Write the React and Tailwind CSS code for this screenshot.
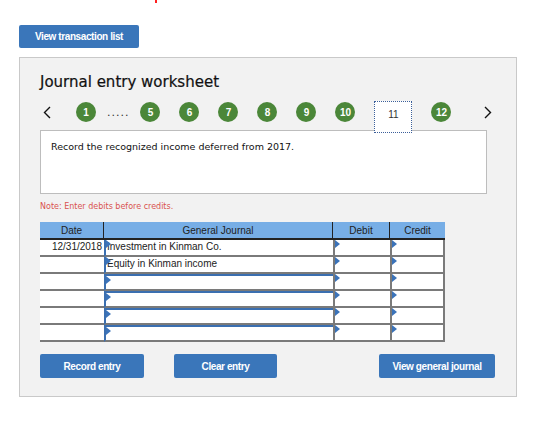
import React from 'react';

const circles = ['5', '6', '7', '8', '9', '10'];

function Flag() {
    return <span className="absolute left-0 top-0 w-0 h-0 border-t-[4px] border-b-[4px] border-l-[5px] border-t-transparent border-b-transparent border-l-[#3b73b9]" />;
}

function Step({ n, className = '' }) {
    return (
        <span className={`mt-[2px] w-[20px] h-[20px] rounded-full bg-[#4b8739] text-white text-[10px] font-bold flex items-center justify-center font-['Liberation_Sans',sans-serif] ${className}`}>
            {n}
        </span>
    );
}

function Chevron({ dir, className = '' }) {
    return (
        <svg className={className} width="8" height="13" viewBox="0 0 8 13" fill="none" stroke="#111" strokeWidth="1.4">
            {dir === 'left' ? <polyline points="7,1 1.5,6.5 7,12" /> : <polyline points="1,1 6.5,6.5 1,12" />}
        </svg>
    );
}

function Cell({ w, blue, text, flag = true, top }) {
    return (
        <div
            className={`relative h-[17px] bg-white border-b-2 border-[#7a7a7a] ${w} ${blue ? 'border-l-2 border-l-[#3b6fb0]' : 'border-l-2 border-l-[#7a7a7a]'} ${top ? 'border-t-2 border-t-[#3b6fb0]' : ''}`}
        >
            {flag && <Flag />}
            {text && <span className="block pl-[1px] leading-[14px] text-[10px] text-[#222]">{text}</span>}
        </div>
    );
}

export default function App() {
    const rows = [
        { date: '12/31/2018', gj: 'Investment in Kinman Co.' },
        { date: '', gj: 'Equity in Kinman income' },
        { date: '', gj: '' },
        { date: '', gj: '' },
        { date: '', gj: '' },
        { date: '', gj: '' },
    ];

    return (
        <div className="w-[539px] h-[431px] bg-white font-['DejaVu_Sans',sans-serif]">
            <div className="flex h-[25px] pl-[155px]">
                <div className="w-[2px] h-[3px] bg-[#ff2020]" />
            </div>
            <div className="flex pl-[19px]">
                <button className="w-[120px] h-[23px] rounded-[2px] bg-[#3a76ba] text-white text-[10px] font-bold tracking-[-0.4px] font-['Liberation_Sans',sans-serif]">
                    View transaction list
                </button>
            </div>

            <div className="ml-[19px] mt-[9px] w-[498px] h-[340px] bg-[#f2f2f2] border border-[#c9c9c9] pl-[20px] pt-[14px]">
                <h1 className="text-[15px] leading-[20px] text-[#111] [-webkit-text-stroke:0.2px_#111]">Journal entry worksheet</h1>

                <div className="flex items-start h-[30px] mt-[8px]">
                    <Chevron dir="left" className="ml-[3px] mt-[6px]" />
                    <Step n="1" className="ml-[25px]" />
                    <span className="ml-[11px] mr-[11px] mt-[5px] text-[11px] tracking-[1px] text-[#333]">.....</span>
                    {circles.map((s, i) => (
                        <Step key={s} n={s} className={i === 0 ? '' : 'ml-[19px]'} />
                    ))}
                    <div className="relative z-10 ml-[19px] mt-[1px] w-[38px] h-[32px] bg-white border border-dotted border-[#3b5f9a] flex justify-center pt-[5px] text-[10px] text-[#333] font-['Liberation_Sans',sans-serif]">
                        11
                    </div>
                    <Step n="12" className="ml-[19px]" />
                    <Chevron dir="right" className="ml-[33px] mt-[6px]" />
                </div>

                <div className="w-[447px] h-[64px] bg-white border border-[#bdbdbd] pl-[10px] pt-[9px]">
                    <p className="text-[9.5px] text-[#111]">Record the recognized income deferred from 2017.</p>
                </div>

                <p className="mt-[7px] text-[8px] text-[#d9534f]">Note: Enter debits before credits.</p>

                <div className="mt-[9px] w-[405px] font-['Liberation_Sans',sans-serif]">
                    <div className="flex h-[18px] bg-[#77aee6] border-b-2 border-[#222] text-[10px] text-[#222]">
                        <div className="w-[64px] flex items-center justify-center border-r border-[#222]">Date</div>
                        <div className="w-[229px] flex items-center justify-center border-r border-[#222]">General Journal</div>
                        <div className="w-[57px] flex items-center justify-center border-r border-[#222]">Debit</div>
                        <div className="w-[55px] flex items-center justify-center">Credit</div>
                    </div>
                    {rows.map((r, i) => (
                        <div key={i} className="flex">
                            <div className="w-[64px] h-[17px] bg-white border-b-2 border-[#7a7a7a] text-[10px] text-[#222] text-right pr-[2px] leading-[14px]">
                                {r.date}
                            </div>
                            <Cell w="w-[229px]" blue text={r.gj} top={i >= 2} />
                            <Cell w="w-[57px]" />
                            <Cell w="w-[55px] border-r-2 border-r-[#7a7a7a]" />
                        </div>
                    ))}
                </div>

                <div className="flex mt-[12px] font-['Liberation_Sans',sans-serif] text-[10px] font-bold tracking-[-0.4px] text-white">
                    <button className="w-[104px] h-[24px] rounded-[2px] bg-[#3a76ba]">Record entry</button>
                    <button className="ml-[30px] w-[103px] h-[24px] rounded-[2px] bg-[#3a76ba]">Clear entry</button>
                    <button className="ml-[102px] w-[116px] h-[24px] rounded-[2px] bg-[#3a76ba]">View general journal</button>
                </div>
            </div>
        </div>
    );
}
